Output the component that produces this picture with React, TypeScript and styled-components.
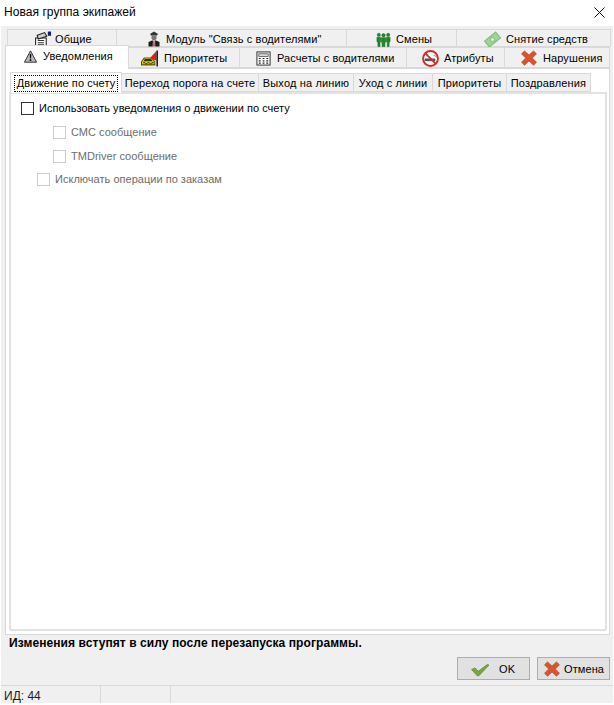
import React from "react";
import styled, { createGlobalStyle } from "styled-components";

const Global = createGlobalStyle`
  html, body { margin: 0; padding: 0; background: #fff; }
  body { font-family: "Liberation Sans", Arial, sans-serif; font-size: 11px; color: #000; }
  * { box-sizing: border-box; }
`;

const Win = styled.div`
  width: 614px; height: 705px; display: flex; flex-direction: column; background: #f0f0f0;
  border-left: 1px solid #fff; border-right: 1px solid #fff; border-bottom: 2px solid #fff; overflow: hidden;
`;
const TitleBar = styled.div`
  height: 26px; background: #fff; display: flex; align-items: center; justify-content: space-between;
  padding: 0 8px 2px 3px; flex: none; font-size: 12px; letter-spacing: 0.05px;
`;
const TabRow = styled.div<{ $left: number; $height: number; $top?: number }>`
  display: flex; margin-left: ${p => p.$left}px; margin-top: ${p => p.$top ?? 0}px; height: ${p => p.$height}px; flex: none; position: relative;
`;
const Tab = styled.div<{ $w: number; $pad: number; $gap: number; $active?: boolean; $drop?: number }>`
  width: ${p => p.$w}px; display: flex; align-items: center; gap: ${p => p.$gap}px; padding-left: ${p => p.$pad}px;
  border: 1px solid #d9d9d9; border-left-width: 0; font-size: 11px; letter-spacing: 0.1px; white-space: nowrap;
  background: #f0f0f0; padding-top: ${p => p.$drop ?? 1}px;
  &:first-child { border-left-width: 1px; }
  ${p => p.$active ? `
    background: #fff; border-bottom: 0; position: relative; z-index: 2; margin-top: -2px;
    height: calc(100% + 3px); border-left-width: 1px; padding-bottom: 3px; padding-top: 0;
  ` : ""}
`;
const Page = styled.div`
  flex: none; height: 567px; margin: 0 3px 0 4px; background: #fff; border: 1px solid #d9d9d9; padding: 3px 1px 3px 3px;
  display: flex; flex-direction: column;
`;
const SubRow = styled.div`
  display: flex; height: 20px; flex: none; margin-left: 1px; position: relative; z-index: 1;
`;
const SubTab = styled.div<{ $w: number; $active?: boolean }>`
  width: ${p => p.$w}px; display: flex; align-items: center; justify-content: center; white-space: nowrap; font-size: 11px; letter-spacing: 0.15px;
  background: ${p => p.$active ? "#fff" : "#f0f0f0"};
  ${p => p.$active ? "height: 21px; border: 1px solid #d9d9d9; border-bottom: 0; letter-spacing: 0.1px;" : "margin-top: 1px; border-width: 1px 1px 1px 0; border-style: solid; border-color: #d9d9d9; padding-top: 1px;"}
`;
const Focus = styled.span`
  border: 1px dotted #000; padding: 0 2px; line-height: 15px; display: block;
`;
const Inner = styled.div`
  flex: 1; border: 2px solid #e3e3e3; background: #fff; padding: 7px 0 0 10px; margin-right: 1px;
  display: flex; flex-direction: column; align-items: flex-start;
`;
const CheckRow = styled.label<{ $indent: number; $off?: boolean; $gap: number }>`
  display: flex; align-items: center; gap: 5px; height: 14px; margin-left: ${p => p.$indent}px; margin-bottom: ${p => p.$gap}px;
  color: ${p => p.$off ? "#6d6d6d" : "#000"}; font-size: 11px; letter-spacing: 0.02px;
`;
const Box = styled.span<{ $off?: boolean }>`
  width: 13px; height: 13px; flex: none; background: #fff; border: 1px solid ${p => p.$off ? "#cccccc" : "#333"};
`;
const Note = styled.div`
  flex: none; height: 22px; padding: 0 0 7px 8px; display: flex; align-items: center; font-weight: 700; font-size: 12px; letter-spacing: 0.08px;
`;
const Buttons = styled.div`
  flex: none; height: 23px; display: flex; justify-content: flex-end; gap: 7px; padding-right: 3px;
`;
const Btn = styled.div<{ $pad: number; $gap: number }>`
  width: 73px; height: 23px; border: 1px solid #adadad; background: #e1e1e1; display: flex; align-items: center; gap: ${p => p.$gap}px;
  padding-left: ${p => p.$pad}px; font-size: 11px; letter-spacing: 0.1px;
`;
const Status = styled.div`
  margin-top: 5px; flex: 1; border-top: 1px solid #d9d9d9; display: flex; align-items: center;
`;
const Cell = styled.div<{ $w: number }>`
  width: ${p => p.$w}px; height: 100%; border-right: 1px solid #d9d9d9; padding: 2px 0 0 3px; display: flex; align-items: center; color: #1a1a2a; font-size: 12px;
`;

const SvgIcon = ({ size = 16, children }: { size?: number; children: React.ReactNode }) => (
  <svg width={size} height={size} viewBox="0 0 16 16" style={{ flex: "none" }}>{children}</svg>
);
const Close = () => (
  <svg width="11" height="11" viewBox="0 0 11 11"><path d="M0.5 0.5 10.5 10.5M10.5 0.5 0.5 10.5" stroke="#111" strokeWidth="1" fill="none" /></svg>
);
const Common = () => (
  <SvgIcon size={17}>
    <path d="M1.500 6.500h10v8.500h-10z" fill="#fff" stroke="#222" />
    <path d="M3 4 10 1.500l2 3.500-8 2.500z" fill="#cfcfcf" stroke="#222" />
    <path d="M3.500 9h6M3.500 11h6M3.500 13h6" stroke="#333" />
    <rect x="13" y="0.500" width="3" height="4" fill="#14148c" />
  </SvgIcon>
);
const Driver = () => (
  <SvgIcon size={16}>
    <path d="M4 3 8 0.500 12 3l-1 1.500H5z" fill="#333" />
    <path d="M5.500 4.500h5v3L9.500 9h-3l-1-1.500z" fill="#777" />
    <path d="M2.500 15.500v-4.500L6 9.500h4l3.500 1.500v4.500z" fill="#1c1c1c" />
    <path d="M7 9.500h2l.3 6H6.700z" fill="#e8e8e8" />
    <path d="M7.500 10h1l.3 5H7.200z" fill="#c4302a" />
  </SvgIcon>
);
const People = () => (
  <SvgIcon size={15}>
    <g fill="#1f8a2b" stroke="#0c5a17" strokeWidth=".5">
      <circle cx="3" cy="3" r="1.700" /><circle cx="13" cy="3" r="1.700" /><circle cx="8" cy="3.500" r="1.800" />
      <path d="M1 5.500h4v5H4.300v5H2v-5H1z" /><path d="M11 5.500h4v5h-1v5h-2v-5h-1z" /><path d="M5.700 6h4.600v5H9.500v4.500h-3V11h-.8z" />
    </g>
  </SvgIcon>
);
const Money = () => (
  <SvgIcon size={17}>
    <path d="M0.500 9.500 11 1 15.500 6.500 5 15z" fill="#9fd39a" stroke="#82b97d" />
    <circle cx="8" cy="8" r="2" fill="#d6f0d0" stroke="#69a865" strokeWidth=".6" />
  </SvgIcon>
);
const Warn = () => (
  <SvgIcon size={13}>
    <path d="M8 1 15.500 15H.5z" fill="#b9b9b9" stroke="#333" strokeWidth="1.200" />
    <path d="M7 5h2l-.3 5.500H7.300zM7 11.500h2V13.500H7z" fill="#111" />
  </SvgIcon>
);
const Taxi = () => (
  <SvgIcon size={17}>
    <path d="M0.500 11 3 7.500h7l3 3.500v3H.5z" fill="#e8d800" stroke="#5a5200" />
    <path d="M3.500 8.500h6l1.500 2H2.500z" fill="#2b2b10" />
    <path d="M2 11.500h2v1H2zM6 11.500h2v1H6zM10 11.500h2v1h-2zM4 12.500h2v1H4zM8 12.500h2v1H8z" fill="#222" />
    <path d="M8.500 7.500 14.500 1v9z" fill="#e02018" />
    <rect x="14.500" y="0.500" width="1.500" height="15" fill="#222" />
  </SvgIcon>
);
const Calc = () => (
  <SvgIcon size={15}>
    <rect x="1" y="1" width="14" height="14" fill="#fff" stroke="#222" />
    <rect x="3" y="3" width="10" height="3" fill="#d8d8d8" stroke="#333" strokeWidth=".7" />
    <path d="M3 8h2M7 8h2M11 8h2M3 10.500h2M7 10.500h2M11 10.500h2M3 13h2M7 13h2M11 13h2" stroke="#222" strokeWidth="1.300" />
  </SvgIcon>
);
const NoSmoke = () => (
  <SvgIcon size={17}>
    <circle cx="8" cy="8" r="7" fill="#fff" stroke="#d42a2a" strokeWidth="1.800" />
    <rect x="2.500" y="8" width="10" height="2.500" fill="#555" />
    <path d="M11 5c1.500 0 1.500 1.500 3 1.500" stroke="#999" fill="none" />
    <path d="M3 3 13 13" stroke="#d42a2a" strokeWidth="1.800" />
  </SvgIcon>
);
const Cross = ({ size = 16 }: { size?: number }) => (
  <SvgIcon size={size}>
    <path d="M3.500 1 8 5 12.500 1 15.500 3.800 11.300 8l4.200 4.300-3 2.900L8 11l-4.500 4.200-3-2.900L4.700 8 .5 3.800z" fill="#d9542f" stroke="#b5492a" strokeWidth=".7" />
  </SvgIcon>
);
const Check = () => (
  <SvgIcon size={18}>
    <path d="M.5 8.500 3.500 7l3 3 8-6 1.500.5L7 14h-1.500z" fill="#7aa83e" stroke="#557a2a" strokeWidth=".6" />
  </SvgIcon>
);

type TabDef = { w: number; pad: number; gap: number; icon: React.ReactNode; label: string; active?: boolean };
const topTabs: TabDef[] = [
  { w: 110, pad: 26, gap: 4, icon: <Common />, label: "Общие" },
  { w: 230, pad: 29, gap: 4, icon: <Driver />, label: 'Модуль "Связь с водителями"' },
  { w: 110, pad: 29, gap: 5, icon: <People />, label: "Смены" },
  { w: 154, pad: 27, gap: 5, icon: <Money />, label: "Снятие средств" },
];
const midTabs: TabDef[] = [
  { w: 124, pad: 18, gap: 6, icon: <Warn />, label: "Уведомления", active: true },
  { w: 111, pad: 12, gap: 6, icon: <Taxi />, label: "Приоритеты" },
  { w: 167, pad: 16, gap: 6, icon: <Calc />, label: "Расчеты с водителями" },
  { w: 98, pad: 15, gap: 5, icon: <NoSmoke />, label: "Атрибуты" },
  { w: 105, pad: 16, gap: 6, icon: <Cross />, label: "Нарушения" },
];
const subTabs: [number, string][] = [
  [112, "Движение по счету"],
  [137, "Переход порога на счете"],
  [95, "Выход на линию"],
  [79, "Уход с линии"],
  [74, "Приоритеты"],
  [84, "Поздравления"],
];
const TabItem = ({ t, drop }: { t: TabDef; drop?: number }) => (
  <Tab $w={t.w} $pad={t.pad} $gap={t.gap} $active={t.active} $drop={drop}>{t.icon}<span>{t.label}</span></Tab>
);

export default function App() {
  return (
    <Win>
      <Global />
      <TitleBar><span>Новая группа экипажей</span><Close /></TitleBar>
      <TabRow $left={6} $height={18} $top={3}>
        {topTabs.map(t => <TabItem key={t.label} t={t} drop={2} />)}
      </TabRow>
      <TabRow $left={4} $height={21}>
        {midTabs.map(t => <TabItem key={t.label} t={t} />)}
      </TabRow>
      <Page>
        <SubRow>
          {subTabs.map(([w, label], i) => (
            <SubTab key={label} $w={w} $active={i === 0}>{i === 0 ? <Focus>{label}</Focus> : label}</SubTab>
          ))}
        </SubRow>
        <Inner>
          <CheckRow $indent={0} $gap={10}><Box /><span>Использовать уведомления о движении по счету</span></CheckRow>
          <CheckRow $indent={32} $gap={10} $off><Box $off /><span>СМС сообщение</span></CheckRow>
          <CheckRow $indent={32} $gap={9} $off><Box $off /><span>TMDriver сообщение</span></CheckRow>
          <CheckRow $indent={16} $gap={0} $off><Box $off /><span>Исключать операции по заказам</span></CheckRow>
        </Inner>
      </Page>
      <Note>Изменения вступят в силу после перезапуска программы.</Note>
      <Buttons>
        <Btn $pad={13} $gap={10}><Check />OK</Btn>
        <Btn $pad={6} $gap={4}><Cross />Отмена</Btn>
      </Buttons>
      <Status>
        <Cell $w={100}>ИД: 44</Cell>
        <Cell $w={70} />
      </Status>
    </Win>
  );
}
